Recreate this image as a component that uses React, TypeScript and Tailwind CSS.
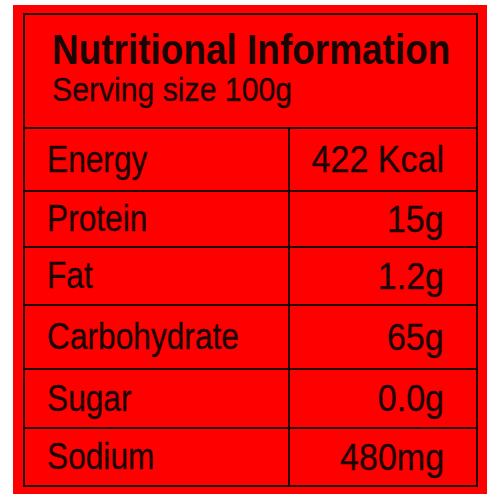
const rows = [
  { label: "Energy", value: "422 Kcal", h: "h-[63px]" },
  { label: "Protein", value: "15g", h: "h-[56px]" },
  { label: "Fat", value: "1.2g", h: "h-[58px]" },
  { label: "Carbohydrate", value: "65g", h: "h-[64px]" },
  { label: "Sugar", value: "0.0g", h: "h-[59px]" },
  { label: "Sodium", value: "480mg", h: "h-[58px]" },
]

export default function App() {
  return (
    <div className="w-[500px] h-[500px] bg-white pt-[5px] pl-[13px] font-['Liberation_Sans',Arial,sans-serif] text-[#1a0505]">
      <div className="w-[474px] h-[489px] bg-[#ff0000] pt-[8px] pl-[10px]">
        <div className="w-[455px] border-2 border-[#220404]">
          {/* Header */}
          <div className="h-[112px] pl-[27px] pt-[14px]">
            <div className="text-[42px] leading-none font-bold whitespace-nowrap">
              <span className="inline-block origin-left scale-x-[0.88]">Nutritional Information</span>
            </div>
            <div className="text-[33px] leading-none mt-[2px] whitespace-nowrap [-webkit-text-stroke:0.3px_#1a0505]">
              <span className="inline-block origin-left scale-x-[0.915]">Serving size 100g</span>
            </div>
          </div>

          {/* Rows */}
          {rows.map((r) => (
            <div key={r.label} className={`flex border-t-2 border-[#220404] ${r.h}`}>
              <div className="w-[265px] border-r-2 border-[#220404] flex items-center pl-[22px] text-[36px] leading-none whitespace-nowrap [-webkit-text-stroke:0.3px_#1a0505]">
                <span className="inline-block origin-left scale-x-[0.88]">{r.label}</span>
              </div>
              <div className="flex-1 flex items-center justify-end pr-[32px] text-[37px] leading-none whitespace-nowrap [-webkit-text-stroke:0.3px_#1a0505]">
                <span className="inline-block origin-right scale-x-[0.92]">{r.value}</span>
              </div>
            </div>
          ))}
        </div>
      </div>
    </div>
  )
}
